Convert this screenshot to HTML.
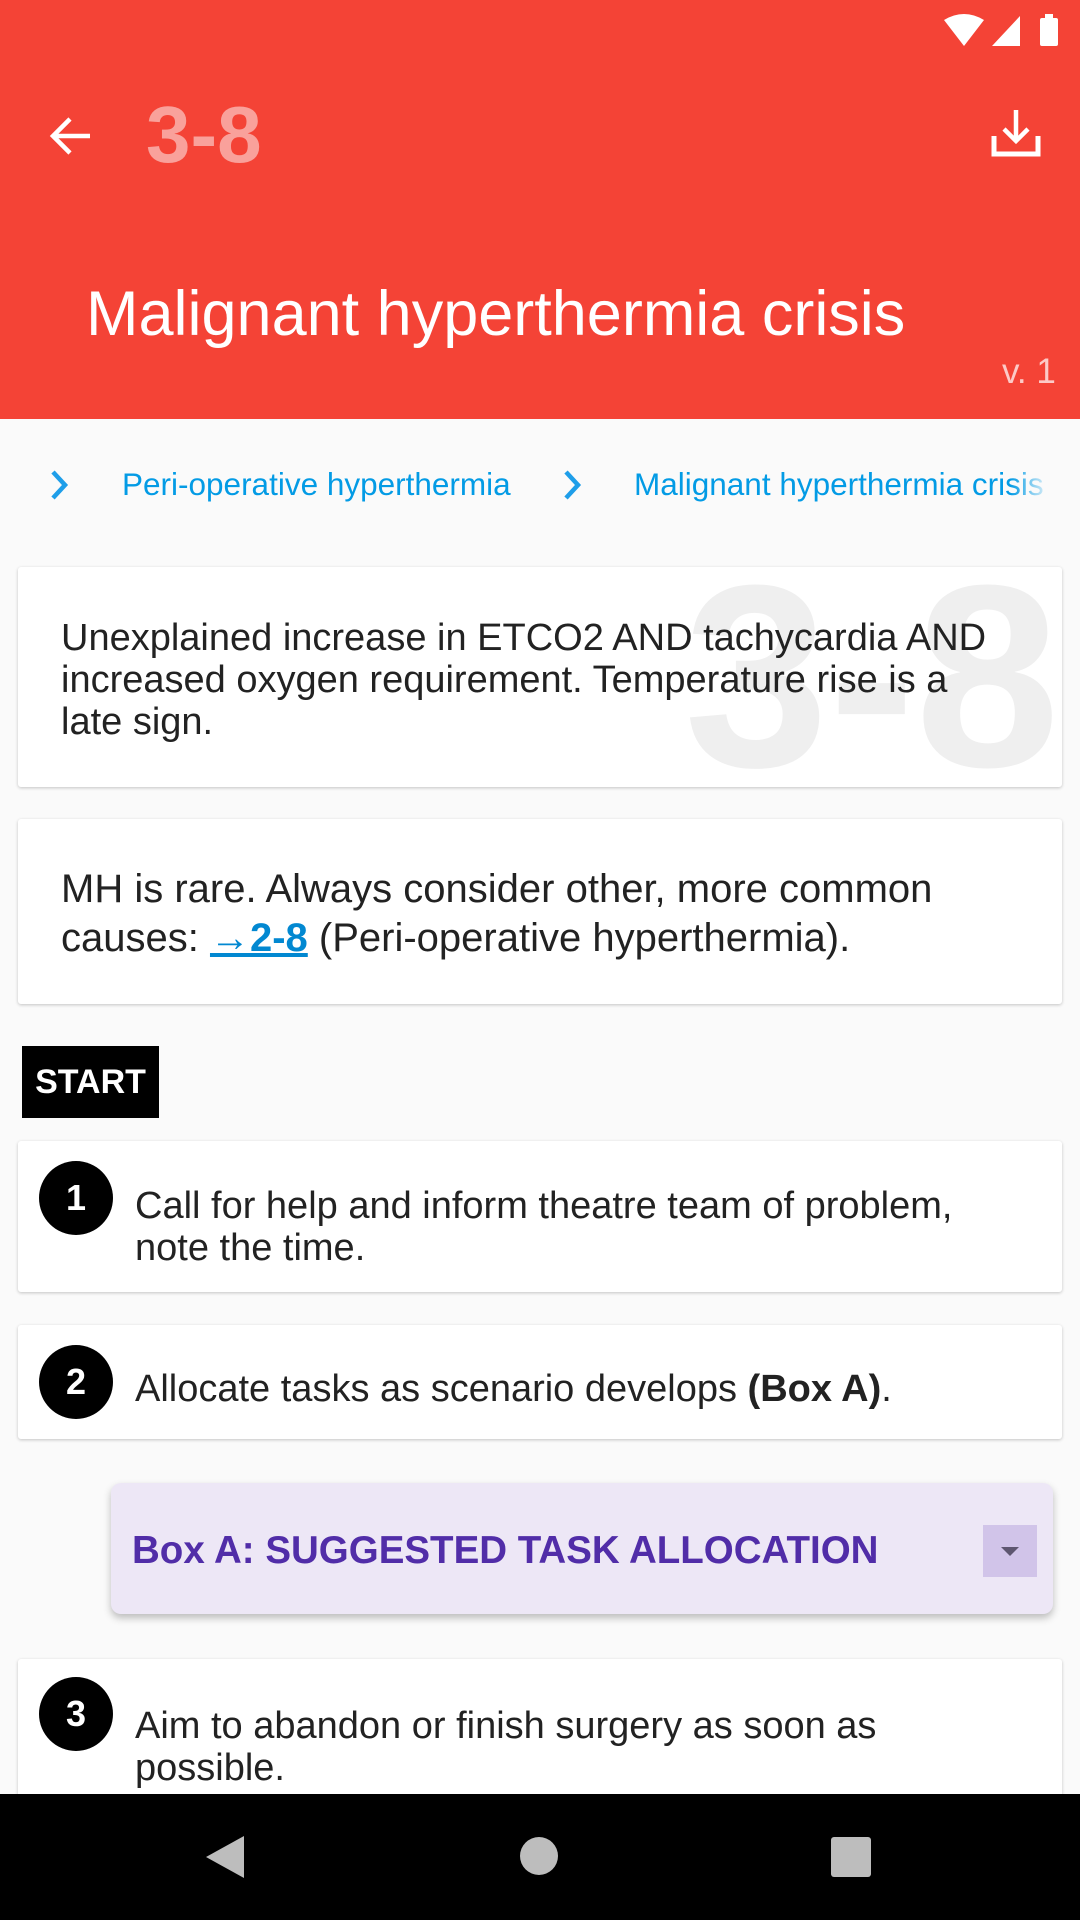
<!DOCTYPE html>
<html><head><meta charset="utf-8"><style>
*{margin:0;padding:0;box-sizing:border-box}
body{width:1080px;height:1920px;overflow:hidden;background:#fafafa;font-family:"Liberation Sans",sans-serif;color:#212121;position:relative}
.abs{position:absolute}
.hdr{left:0;top:0;width:1080px;height:419px;background:#f44336}
.card{position:absolute;left:18px;width:1044px;background:#fff;border-radius:3px;box-shadow:0 1px 3px rgba(0,0,0,.22)}
.txt{position:absolute;font-size:38px;line-height:42px;color:#222}
.num{position:absolute;width:74px;height:74px;border-radius:50%;background:#000;color:#fff;font-weight:bold;font-size:36px;line-height:74px;text-align:center}
</style></head><body>
<div class="abs hdr"></div>
<svg class="abs" style="left:940px;top:12px" width="130" height="36" viewBox="0 0 130 36">
<path d="M4 8 Q24 -4 44 8 L24 34 Z" fill="#fff"/>
<path d="M52 34 L80 4 L80 34 Z" fill="#fff"/>
<rect x="100" y="6" width="18" height="28" rx="2" fill="#fff"/><rect x="105" y="2" width="8" height="5" fill="#fff"/>
</svg>
<svg class="abs" style="left:48px;top:113px" width="46" height="46" viewBox="0 0 46 46"><path d="M42 23 H6 M22 6 L5 23 L22 40" stroke="#fff" stroke-width="4.5" fill="none"/></svg>
<div class="abs" style="left:146px;top:92px;font-size:80px;font-weight:bold;color:#f9a19b;line-height:86px">3-8</div>
<svg class="abs" style="left:990px;top:108px" width="52" height="52" viewBox="0 0 52 52"><path d="M26 2 V32 M14 21 L26 33 L38 21" stroke="#fff" stroke-width="4.5" fill="none"/><path d="M4 28 V46 H48 V28" stroke="#fff" stroke-width="5" fill="none"/></svg>
<div class="abs" style="left:86px;top:278px;font-size:63px;color:#fff;line-height:72px;white-space:nowrap">Malignant hyperthermia crisis</div>
<div class="abs" style="left:1002px;top:352px;font-size:35px;color:rgba(255,255,255,.72)">v. 1</div>
<svg class="abs" style="left:48px;top:468px" width="24" height="34" viewBox="0 0 24 34"><path d="M5 4 L17 17 L5 30" stroke="#1e9ee9" stroke-width="4.5" fill="none"/></svg>
<div class="abs" style="left:122px;top:466px;font-size:31.5px;color:#039be5;white-space:nowrap">Peri-operative hyperthermia</div>
<svg class="abs" style="left:561px;top:468px" width="24" height="34" viewBox="0 0 24 34"><path d="M5 4 L17 17 L5 30" stroke="#1e9ee9" stroke-width="4.5" fill="none"/></svg>
<div class="abs" style="left:634px;top:466px;width:414px;overflow:hidden;font-size:31.5px;color:#039be5;white-space:nowrap">Malignant hyperthermia crisis</div>
<div class="abs" style="left:1010px;top:450px;width:70px;height:80px;background:linear-gradient(90deg,rgba(250,250,250,0),#fafafa 60%)"></div>
<div class="card" style="top:567px;height:220px;overflow:hidden">
<div class="abs" style="left:666px;top:-10px;font-size:260px;font-weight:bold;color:#efefef;line-height:240px">3-8</div>
<div class="txt" style="left:43px;top:50px;width:935px">Unexplained increase in ETCO2 AND tachycardia AND increased oxygen requirement. Temperature rise is a late sign.</div>
</div>
<div class="card" style="top:819px;height:185px">
<div class="txt" style="left:43px;top:46px;width:980px;font-size:40px;line-height:49px">MH is rare. Always consider other, more common causes: <span style="color:#0288d1;font-weight:bold;text-decoration:underline">→2-8</span> (Peri-operative hyperthermia).</div>
</div>
<div class="abs" style="left:22px;top:1046px;width:137px;height:72px;background:#000;color:#fff;font-weight:bold;font-size:34px;line-height:72px;text-align:center">START</div>
<div class="card" style="top:1141px;height:151px">
<div class="num" style="left:21px;top:20px">1</div>
<div class="txt" style="left:117px;top:44px;width:860px">Call for help and inform theatre team of problem, note the time.</div>
</div>
<div class="card" style="top:1325px;height:114px">
<div class="num" style="left:21px;top:20px">2</div>
<div class="txt" style="left:117px;top:43px;width:920px">Allocate tasks as scenario develops <b>(Box A)</b>.</div>
</div>
<div class="abs" style="left:111px;top:1483px;width:942px;height:131px;background:#ede7f6;border-radius:10px;box-shadow:0 4px 8px rgba(0,0,0,.25)">
<div class="abs" style="left:21px;top:46px;font-size:38.5px;font-weight:bold;color:#512da8;white-space:nowrap">Box A: SUGGESTED TASK ALLOCATION</div>
<div class="abs" style="left:872px;top:42px;width:54px;height:52px;background:#d1c4e9"><svg width="54" height="52"><path d="M18 22 L36 22 L27 31 Z" fill="#5e5670"/></svg></div>
</div>
<div class="card" style="top:1659px;height:200px">
<div class="num" style="left:21px;top:18px">3</div>
<div class="txt" style="left:117px;top:46px;width:860px">Aim to abandon or finish surgery as soon as possible.</div>
</div>
<div class="abs" style="left:0;top:1794px;width:1080px;height:126px;background:#000"></div>
<svg class="abs" style="left:200px;top:1832px" width="50" height="50"><path d="M44 4 V46 L6 25 Z" fill="#bdbdbd"/></svg>
<div class="abs" style="left:520px;top:1837px;width:38px;height:38px;border-radius:50%;background:#bdbdbd"></div>
<div class="abs" style="left:831px;top:1837px;width:40px;height:40px;border-radius:3px;background:#bdbdbd"></div>
</body></html>
